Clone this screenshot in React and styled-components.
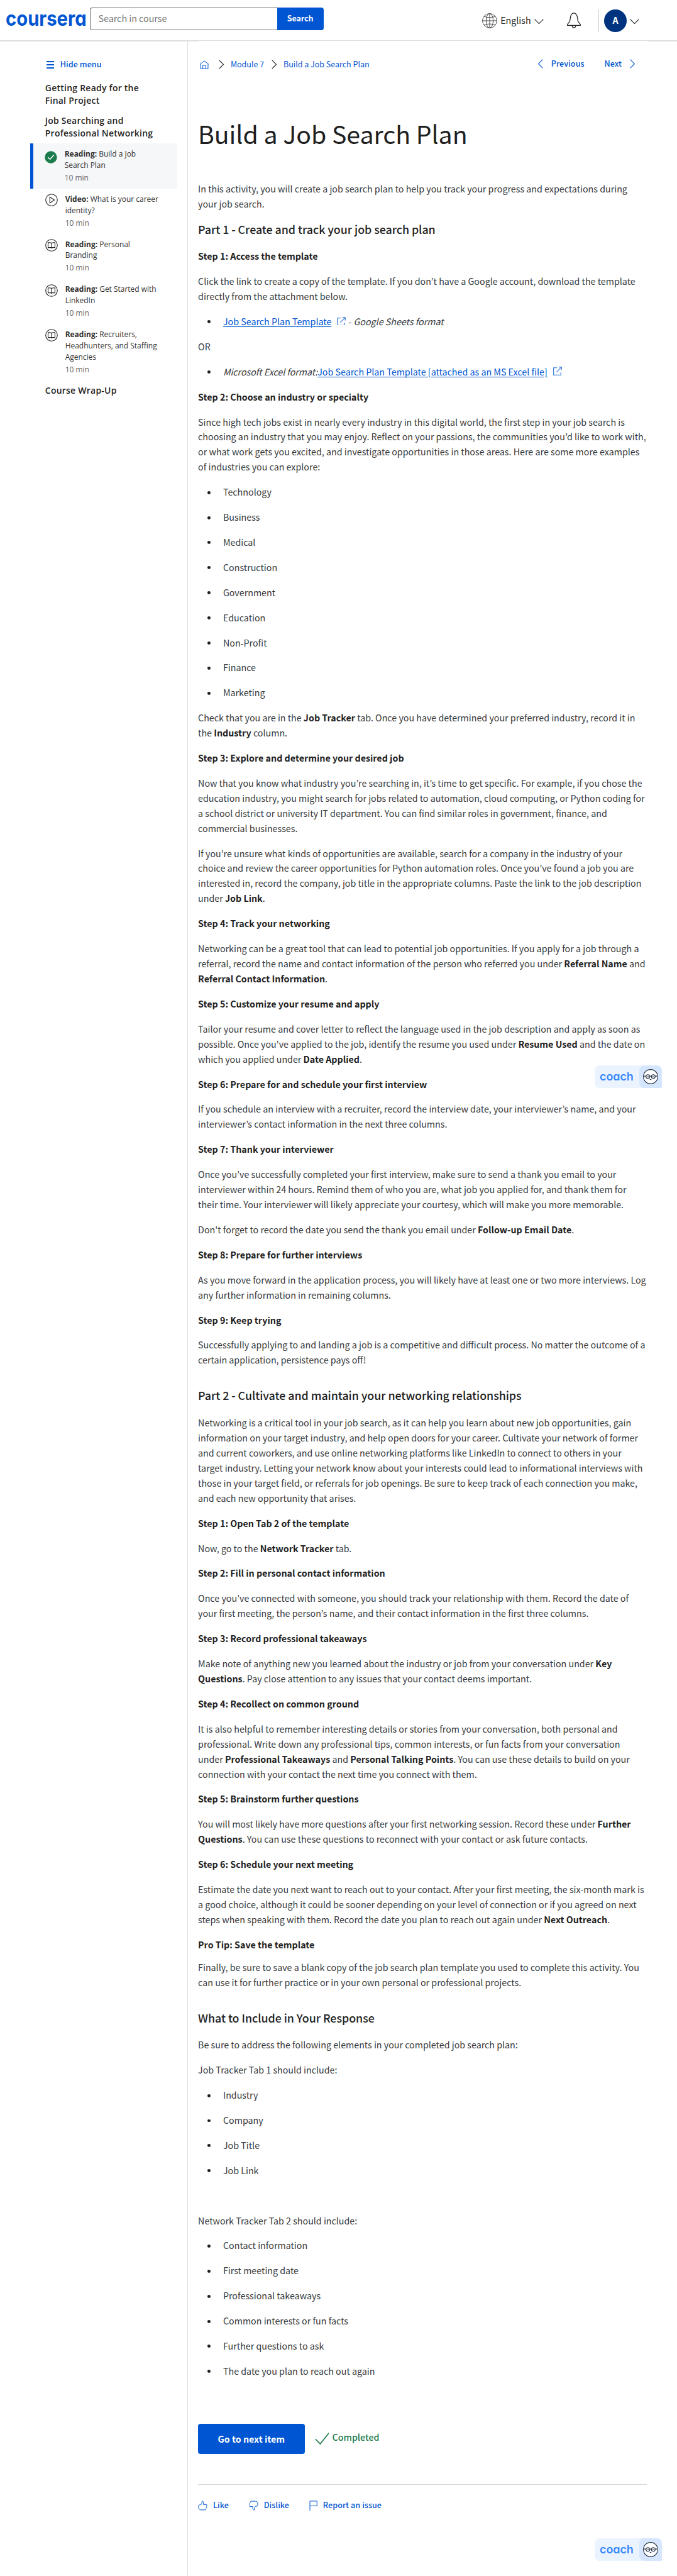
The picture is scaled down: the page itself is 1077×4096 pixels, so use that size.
import React from "react";
import styled, { createGlobalStyle, css } from "styled-components";

const sans = `"Noto Sans CJK KR", "Noto Sans CJK SC", "Open Sans", sans-serif`;
const blue = "#0056d2";
/* The Latin glyphs of Noto Sans CJK are drawn larger than their nominal size. */
const fs = (n) => `${(n * 0.8953).toFixed(3)}px`;

const Global = createGlobalStyle`
  * { box-sizing: border-box; }
  body { margin: 0; background: #fff; }
  #root { zoom: 0.9971; }
`;

const Page = styled.div`
  position: relative;
  width: 1080px;
  height: 4108px;
  display: flex;
  flex-direction: column;
  font-family: ${sans};
  color: #1f1f1f;
  background: #fff;
`;

const Header = styled.header`
  height: 65px;
  flex: none;
  display: flex;
  align-items: flex-start;
  padding: 12px 60px 0 10px;
  border-bottom: 1px solid #dcdcdc;
`;
const Logo = styled.svg`
  display: block;
  flex: none;
  margin: -6px 2px 0 -1px;
  text { font-family: Inter, Lato, sans-serif; font-weight: 700; font-feature-settings: "cv11"; }
`;
const SearchBox = styled.div`
  display: flex;
  height: 36px;
  width: 374px;
`;
const SearchField = styled.div`
  flex: 1;
  border: 1px solid #636363;
  border-right: 0;
  border-radius: 4px 0 0 4px;
  padding-left: 13px;
  font-size: ${fs(16)};
  line-height: 33px;
  color: #757575;
`;
const SearchButton = styled.button`
  width: 75px;
  border: 0;
  border-radius: 0 4px 4px 0;
  background: ${blue};
  color: #fff;
  font: 700 ${fs(14)}/36px ${sans};
  letter-spacing: -0.1px;
  padding: 0 1px 0 0;
`;
const HeaderTools = styled.div`
  margin-left: auto;
  display: flex;
  align-items: center;
  height: 42px;
`;
const Language = styled.div`
  display: flex;
  align-items: center;
  font-size: ${fs(16)};
  line-height: 24px;
  span { margin: -1px 5px 0 5px; }
`;
const BellWrap = styled.div`
  display: flex;
  margin-left: 38px;
`;
const Divider = styled.div`
  width: 2px;
  height: 36px;
  background: #e0e0e0;
  margin: 0 8px 0 27px;
`;
const Avatar = styled.div`
  width: 36px;
  height: 36px;
  border-radius: 50%;
  background: #00337f;
  color: #fff;
  font-weight: 700;
  font-size: ${fs(16)};
  line-height: 35px;
  text-align: center;
  margin-right: 5px;
`;

const Body = styled.div`
  flex: 1;
  display: grid;
  grid-template-columns: 300px 1fr;
  background:
    linear-gradient(#e4e4e4, #e4e4e4) 0 0 / 316px 1px no-repeat,
    linear-gradient(#e4e4e4, #e4e4e4) 100% 0 / 48px 1px no-repeat;
`;
const Sidebar = styled.aside`
  border-right: 1px solid #dedede;
  padding: 26px 16px 0 48px;
  font-family: "Open Sans", sans-serif;
`;
const HideMenu = styled.div`
  display: flex;
  align-items: center;
  gap: 10px;
  height: 24px;
  padding-left: 26px;
  color: ${blue};
  font: 500 ${fs(14)}/24px ${sans};
  letter-spacing: 0.1px;
`;
const LessonTitle = styled.h3`
  margin: ${(p) => p.$top}px 0 0;
  padding-left: 24px;
  font-size: 14px;
  line-height: 20px;
  font-weight: 600;
  letter-spacing: 0.27px;
`;
const Items = styled.div`
  margin-top: 6.5px;
`;
const Item = styled.div`
  display: flex;
  align-items: flex-start;
  gap: 12px;
  padding: 7.7px 0 8.3px ${(p) => (p.$active ? 18 : 24)}px;
  ${(p) => p.$active && css`
    border-left: 6px solid ${blue};
    background: #f5f7f8;
  `}
  > svg { flex: none; margin-top: ${(p) => (p.$active ? 4.3 : 0.3)}px; }
`;
const ItemText = styled.div`
  width: 150px;
  font-size: 12px;
  line-height: 18px;
  color: #333;
  strong { font-weight: 700; }
`;
const Duration = styled.div`
  margin-top: 2px;
  color: #636363;
`;

const Main = styled.main`
  padding: 26px 48px 0 16px;
`;
const TopNav = styled.nav`
  display: flex;
  align-items: center;
  height: 24px;
  color: ${blue};
  font-size: ${fs(14)};
  line-height: 24px;
  padding: 0 19px 0 3px;
`;
const Crumb = styled.span`
  margin: 0 ${(p) => p.$gap || 0}px 0 11px;
`;
const StepLinks = styled.div`
  margin: -2px 0 0 auto;
  display: flex;
  align-items: center;
  font-weight: 500;
  letter-spacing: 0.1px;
  span:first-of-type { margin: 0 32px 0 13px; }
  span:last-of-type { margin-right: 13px; }
`;
const Title = styled.h1`
  margin: 71.5px 0 50px;
  font-size: ${fs(44)};
  font-weight: 400;
  line-height: 52px;
  letter-spacing: -0.05px;
`;

const Article = styled.article`
  display: flex;
  flex-direction: column;
  gap: 16px;
  font-size: ${fs(16)};
  line-height: 24px;
  color: #373a3c;
  strong { font-weight: 700; color: #1f1f1f; }
`;
const P = styled.p`
  margin: ${(p) => p.$pull || 0}px 0 0;
  min-height: 24px;
`;
const PartTitle = styled.h2`
  margin: ${(p) => (p.$first ? "1.5px 0 2.5px" : "17px 0 3px")};
  font-size: ${fs(20)};
  line-height: 24px;
  font-weight: 500;
  letter-spacing: -0.05px;
  color: #1f1f1f;
`;
const StepTitle = styled.h4`
  margin: 0;
  font-size: inherit;
  font-weight: 700;
  color: #1f1f1f;
`;
const List = styled.ul`
  margin: 0;
  padding: 0;
  list-style: none;
  display: flex;
  flex-direction: column;
  gap: 16px;
`;
const Li = styled.li`
  display: flex;
  align-items: center;
  height: 24px;
  white-space: pre;
  &::before {
    content: "";
    width: 5px;
    height: 5px;
    border-radius: 50%;
    background: #1f1f1f;
    margin: 2px 20px 0 15px;
  }
  em { letter-spacing: ${(p) => p.$ls || 0}px; }
`;
const Link = styled.a`
  color: ${blue};
  text-decoration: underline;
  text-underline-offset: 2px;
  text-decoration-thickness: 1px;
`;
const External = styled.svg`
  margin: -1px ${(p) => p.$right || 0}px 0 9px;
`;

const Actions = styled.div`
  display: flex;
  margin-top: 72.5px;
  height: 48px;
`;
const NextButton = styled.button`
  width: 170px;
  height: 48px;
  border: 0;
  border-radius: 4px;
  background: ${blue};
  color: #fff;
  font: 700 ${fs(16)}/47px ${sans};
  padding: 0;
`;
const Completed = styled.div`
  display: flex;
  align-items: center;
  gap: 5px;
  margin-left: 16px;
  color: #1d7c4d;
  font-weight: 500;
  font-size: ${fs(16)};
  line-height: 24px;
  span { margin-top: -5px; }
`;
const Feedback = styled.div`
  display: flex;
  align-items: center;
  margin-top: 48px;
  padding-top: 20px;
  border-top: 1px solid #d9d9d9;
  color: ${blue};
  font-weight: 500;
  font-size: ${fs(14)};
  line-height: 26px;
`;
const FeedbackItem = styled.div`
  display: flex;
  align-items: center;
  gap: 9px;
  margin-right: 32px;
  letter-spacing: 0.1px;
`;

const CoachBox = styled.div`
  position: absolute;
  left: 949px;
  top: ${(p) => p.$top}px;
  width: 107px;
  height: 36px;
  display: flex;
  justify-content: space-between;
  background: #ebf3ff;
  border-radius: 8px 8px 1px 8px;
  text { font-family: Inter, Lato, sans-serif; font-weight: 600; font-feature-settings: "cv11"; }
`;
const CoachFace = styled.div`
  width: 36px;
  display: grid;
  place-items: center;
  background: #d6e6ff;
  border-radius: 8px 8px 1px 8px;
`;

const ChevronIcon = styled.svg`
  flex: none;
  margin-top: ${(p) => (p.$down ? 1.5 : 0)}px;
`;
const Chevron = ({ dir = "right", color = "#1f1f1f" }) => {
  const down = dir === "down";
  const d = down ? "M.6.6 7.5 7.6 14.4.6" : dir === "right" ? "M.6.6 7.4 7.5.6 14.4" : "M7.4.6.6 7.5 7.4 14.4";
  return (
    <ChevronIcon $down={down} width={down ? 15 : 8} height={down ? 8 : 15} fill="none" stroke={color} strokeWidth="1.1">
      <path d={d} />
    </ChevronIcon>
  );
};

const Globe = () => (
  <svg width="24" height="24" fill="none" stroke="#4a4a4a" strokeWidth="1">
    <circle cx="12" cy="12" r="11.4" />
    <ellipse cx="12" cy="12" rx="5.6" ry="11.4" />
    <path d="M12 .6V23.400M.6 12H23.400M3 5C8 7.400 16 7.400 21 5M3 19C8 16.600 16 16.600 21 19" />
  </svg>
);
const Bell = () => (
  <svg width="22" height="25" fill="none" stroke="#1f1f1f" strokeWidth="1.2">
    <path d="M.7 20.500H21.300V18.800L17.800 14.500C17 13 16.800 8.500 16.200 6C15.400 2.800 13.400.8 11 .8S6.600 2.800 5.800 6C5.200 8.500 5 13 4.200 14.500L.7 18.800ZM8 20.800C8.200 25 13.800 25 14 20.800" />
  </svg>
);
const Home = () => (
  <svg width="14" height="14" fill="none" stroke={blue} strokeWidth="1">
    <path d="M.3 6 7 .8 13.700 6M1 5.500V13.400H13V5.500M4.700 13.400V8H9.300V13.400" />
  </svg>
);
const Menu = () => (
  <svg width="12" height="12" fill={blue}>
    <path d="M0 0H12V2H0ZM0 5H12V7H0ZM0 10H12V12H0Z" />
  </svg>
);
const Done = () => (
  <svg width="20" height="20" fill="none">
    <circle cx="10" cy="10" r="9.700" fill="#1d7c4d" />
    <path d="M5.300 10.200 8.600 13.300 15 6.300" stroke="#fff" strokeWidth="1.500" />
  </svg>
);
const Play = () => (
  <svg width="20" height="20" fill="none" stroke="#1f1f1f" strokeWidth="1.1">
    <circle cx="10" cy="10" r="9.300" />
    <path d="M7.300 5.300V14.700L14.600 10Z" />
  </svg>
);
const Book = () => (
  <svg width="20" height="20" fill="none" stroke="#1f1f1f" strokeWidth="1.1">
    <circle cx="10" cy="10" r="9.300" />
    <path d="M10 6.600C8.800 5.800 6.500 5.700 4.500 5.900V13.700H8.600L10 14.600 11.400 13.700H15.500V5.900C13.500 5.700 11.200 5.800 10 6.600V14.300" />
  </svg>
);
const Ext = ({ right }) => (
  <External $right={right} width="14" height="14" fill="none" stroke="#2a73dc" strokeWidth="1.1">
    <path d="M6 1.700H.7V13.300H12.300V9M5.300 8.700 13 .9M8.600.7H13.300V5.400" />
  </External>
);
const Tick = () => (
  <svg width="23" height="20" fill="none" stroke="#1d7c4d" strokeWidth="1.7">
    <path d="M.8 10.300 8.500 18 22.200.8" />
  </svg>
);
const Thumb = ({ down }) => (
  <svg width="15" height="16" fill="none" stroke={blue} strokeWidth="1">
    <path
      transform={down ? "rotate(180 7.5 8)" : undefined}
      d="M.9 8.200C1.300 7.300 2 6.800 3 6.800H4.500C6 5.500 6.300 3.500 6.500.8C8.300.9 9 2.200 8.900 3.800L8.500 6.300H13.200C14.300 6.600 14.300 8 13.500 8.400C14.200 9.300 14 10 13.300 10.500C13.700 11.300 13.500 12 12.800 12.500C13 13.600 12.500 14.700 11.500 14.900H4.500C2 14.900.9 13 .9 11Z"
    />
  </svg>
);
const Flag = () => (
  <svg width="13" height="16" fill="none" stroke={blue} strokeWidth="1">
    <path d="M1 16V.9H12.300V8.600H1" />
  </svg>
);

const Coach = ({ top }) => (
  <CoachBox $top={top}>
    <svg width="66" height="36">
      <text x="8" y="24.500" fontSize="18" fill="#3587fc" textLength="54" lengthAdjust="spacingAndGlyphs">coach</text>
    </svg>
    <CoachFace>
      <svg width="24" height="24" fill="none" stroke="#1f2b3d" strokeWidth="1.100">
        <circle cx="12" cy="12" r="11.400" fill="#fff" />
        <circle cx="7.700" cy="11.800" r="3" />
        <circle cx="16.300" cy="11.800" r="3" />
        <path d="M10.700 11.500Q12 10.600 13.300 11.500M1.800 11.200H4.700M19.300 11.200H22.200M10.800 16.200Q12 17.300 13.200 16.200" />
        <path d="M8 10.900V12.700M16 10.900V12.700" strokeWidth="1.300" />
      </svg>
    </CoachFace>
  </CoachBox>
);

const items = [
  { icon: <Done />, kind: "Reading", name: "Build a Job Search Plan", active: true },
  { icon: <Play />, kind: "Video", name: "What is your career identity?" },
  { icon: <Book />, kind: "Reading", name: <>Personal<br />Branding</> },
  { icon: <Book />, kind: "Reading", name: "Get Started with LinkedIn" },
  { icon: <Book />, kind: "Reading", name: "Recruiters, Headhunters, and Staffing Agencies" },
];

const Bullets = ({ of }) => <List>{of.map((t) => <Li key={t}>{t}</Li>)}</List>;

export default function App() {
  return (
    <Page>
      <Global />
      <Header>
        <Logo width="132" height="44">
          <text x="0" y="34.800" fontSize="32.500" fill={blue} textLength="129" lengthAdjust="spacingAndGlyphs">coursera</text>
        </Logo>
        <SearchBox>
          <SearchField>Search in course</SearchField>
          <SearchButton>Search</SearchButton>
        </SearchBox>
        <HeaderTools>
          <Language><Globe /><span>English</span><Chevron dir="down" /></Language>
          <BellWrap><Bell /></BellWrap>
          <Divider />
          <Avatar>A</Avatar>
          <Chevron dir="down" />
        </HeaderTools>
      </Header>
      <Body>
        <Sidebar>
          <HideMenu><Menu /><span>Hide menu</span></HideMenu>
          <LessonTitle $top={15.5}>Getting Ready for the<br />Final Project</LessonTitle>
          <LessonTitle $top={12}>Job Searching and<br />Professional Networking</LessonTitle>
          <Items>
            {items.map((it, i) => (
              <Item key={i} $active={it.active}>
                {it.icon}
                <ItemText>
                  <strong>{it.kind}:</strong> {it.name}
                  <Duration>10 min</Duration>
                </ItemText>
              </Item>
            ))}
          </Items>
          <LessonTitle $top={5.5}>Course Wrap-Up</LessonTitle>
        </Sidebar>
        <Main>
          <TopNav>
            <Home />
            <Crumb $gap={5} /><Chevron />
            <Crumb $gap={12}>Module 7</Crumb><Chevron />
            <Crumb>Build a Job Search Plan</Crumb>
            <StepLinks>
              <Chevron dir="left" color={blue} />
              <span>Previous</span>
              <span>Next</span>
              <Chevron color={blue} />
            </StepLinks>
          </TopNav>
          <Title>Build a Job Search Plan</Title>
          <Article>
            <P>In this activity, you will create a job search plan to help you track your progress and expectations during your job search.</P>
            <PartTitle $first>Part 1 - Create and track your job search plan</PartTitle>
            <StepTitle>Step 1: Access the template</StepTitle>
            <P>Click the link to create a copy of the template. If you don’t have a Google account, download the template directly from the attachment below.</P>
            <List>
              <Li><Link>Job Search Plan Template</Link><Ext right={4} />- <em>Google Sheets format</em></Li>
            </List>
            <P>OR</P>
            <List>
              <Li $ls={-0.05}><em>Microsoft Excel format:</em><Link>Job Search Plan Template [attached as an MS Excel file]</Link><Ext /></Li>
            </List>
            <StepTitle>Step 2: Choose an industry or specialty</StepTitle>
            <P>Since high tech jobs exist in nearly every industry in this digital world, the first step in your job search is choosing an industry that you may enjoy. Reflect on your passions, the communities you’d like to work with, or what work gets you excited, and investigate opportunities in those areas. Here are some more examples of industries you can explore:</P>
            <Bullets of={["Technology", "Business", "Medical", "Construction", "Government", "Education", "Non-Profit", "Finance", "Marketing"]} />
            <P>Check that you are in the <strong>Job Tracker</strong> tab. Once you have determined your preferred industry, record it in the <strong>Industry</strong> column.</P>
            <StepTitle>Step 3: Explore and determine your desired job</StepTitle>
            <P>Now that you know what industry you’re searching in, it’s time to get specific. For example, if you chose the education industry, you might search for jobs related to automation, cloud computing, or Python coding for a school district or university IT department. You can find similar roles in government, finance, and commercial businesses.</P>
            <P>If you’re unsure what kinds of opportunities are available, search for a company in the industry of your choice and review the career opportunities for Python automation roles. Once you’ve found a job you are interested in, record the company, job title in the appropriate columns. Paste the link to the job description under <strong>Job Link</strong>.</P>
            <StepTitle>Step 4: Track your networking</StepTitle>
            <P>Networking can be a great tool that can lead to potential job opportunities. If you apply for a job through a referral, record the name and contact information of the person who referred you under <strong>Referral Name</strong> and <strong>Referral Contact Information</strong>.</P>
            <StepTitle>Step 5: Customize your resume and apply</StepTitle>
            <P>Tailor your resume and cover letter to reflect the language used in the job description and apply as soon as possible. Once you've applied to the job, identify the resume you used under <strong>Resume Used</strong> and the date on which you applied under <strong>Date Applied</strong>.</P>
            <StepTitle>Step 6: Prepare for and schedule your first interview</StepTitle>
            <P>If you schedule an interview with a recruiter, record the interview date, your interviewer’s name, and your interviewer’s contact information in the next three columns.</P>
            <StepTitle>Step 7: Thank your interviewer</StepTitle>
            <P>Once you’ve successfully completed your first interview, make sure to send a thank you email to your interviewer within 24 hours. Remind them of who you are, what job you applied for, and thank them for their time. Your interviewer will likely appreciate your courtesy, which will make you more memorable.</P>
            <P>Don't forget to record the date you send the thank you email under <strong>Follow-up Email Date</strong>.</P>
            <StepTitle>Step 8: Prepare for further interviews</StepTitle>
            <P>As you move forward in the application process, you will likely have at least one or two more interviews. Log any further information in remaining columns.</P>
            <StepTitle>Step 9: Keep trying</StepTitle>
            <P>Successfully applying to and landing a job is a competitive and difficult process. No matter the outcome of a certain application, persistence pays off!</P>
            <PartTitle>Part 2 - Cultivate and maintain your networking relationships</PartTitle>
            <P>Networking is a critical tool in your job search, as it can help you learn about new job opportunities, gain information on your target industry, and help open doors for your career. Cultivate your network of former and current coworkers, and use online networking platforms like LinkedIn to connect to others in your target industry. Letting your network know about your interests could lead to informational interviews with those in your target field, or referrals for job openings. Be sure to keep track of each connection you make, and each new opportunity that arises.</P>
            <StepTitle>Step 1: Open Tab 2 of the template</StepTitle>
            <P>Now, go to the <strong>Network Tracker</strong> tab.</P>
            <StepTitle>Step 2: Fill in personal contact information</StepTitle>
            <P>Once you’ve connected with someone, you should track your relationship with them. Record the date of your first meeting, the person’s name, and their contact information in the first three columns.</P>
            <StepTitle>Step 3: Record professional takeaways</StepTitle>
            <P>Make note of anything new you learned about the industry or job from your conversation under <strong>Key Questions</strong>. Pay close attention to any issues that your contact deems important.</P>
            <StepTitle>Step 4: Recollect on common ground</StepTitle>
            <P>It is also helpful to remember interesting details or stories from your conversation, both personal and professional. Write down any professional tips, common interests, or fun facts from your conversation under <strong>Professional Takeaways</strong> and <strong>Personal Talking Points</strong>. You can use these details to build on your connection with your contact the next time you connect with them.</P>
            <StepTitle>Step 5: Brainstorm further questions</StepTitle>
            <P>You will most likely have more questions after your first networking session. Record these under <strong>Further Questions</strong>. You can use these questions to reconnect with your contact or ask future contacts.</P>
            <StepTitle>Step 6: Schedule your next meeting</StepTitle>
            <P>Estimate the date you next want to reach out to your contact. After your first meeting, the six-month mark is a good choice, although it could be sooner depending on your level of connection or if you agreed on next steps when speaking with them. Record the date you plan to reach out again under <strong>Next Outreach</strong>.</P>
            <StepTitle>Pro Tip: Save the template</StepTitle>
            <P $pull={-4}>Finally, be sure to save a blank copy of the job search plan template you used to complete this activity. You can use it for further practice or in your own personal or professional projects.</P>
            <PartTitle>What to Include in Your Response</PartTitle>
            <P>Be sure to address the following elements in your completed job search plan:</P>
            <P>Job Tracker Tab 1 should include:</P>
            <Bullets of={["Industry", "Company", "Job Title", "Job Link"]} />
            <P />
            <P>Network Tracker Tab 2 should include:</P>
            <Bullets of={["Contact information", "First meeting date", "Professional takeaways", "Common interests or fun facts", "Further questions to ask", "The date you plan to reach out again"]} />
          </Article>
          <Actions>
            <NextButton>Go to next item</NextButton>
            <Completed><Tick /><span>Completed</span></Completed>
          </Actions>
          <Feedback>
            <FeedbackItem><Thumb /><span>Like</span></FeedbackItem>
            <FeedbackItem><Thumb down /><span>Dislike</span></FeedbackItem>
            <FeedbackItem><Flag /><span>Report an issue</span></FeedbackItem>
          </Feedback>
        </Main>
      </Body>
      <Coach top={1699} />
      <Coach top={4048} />
    </Page>
  );
}
